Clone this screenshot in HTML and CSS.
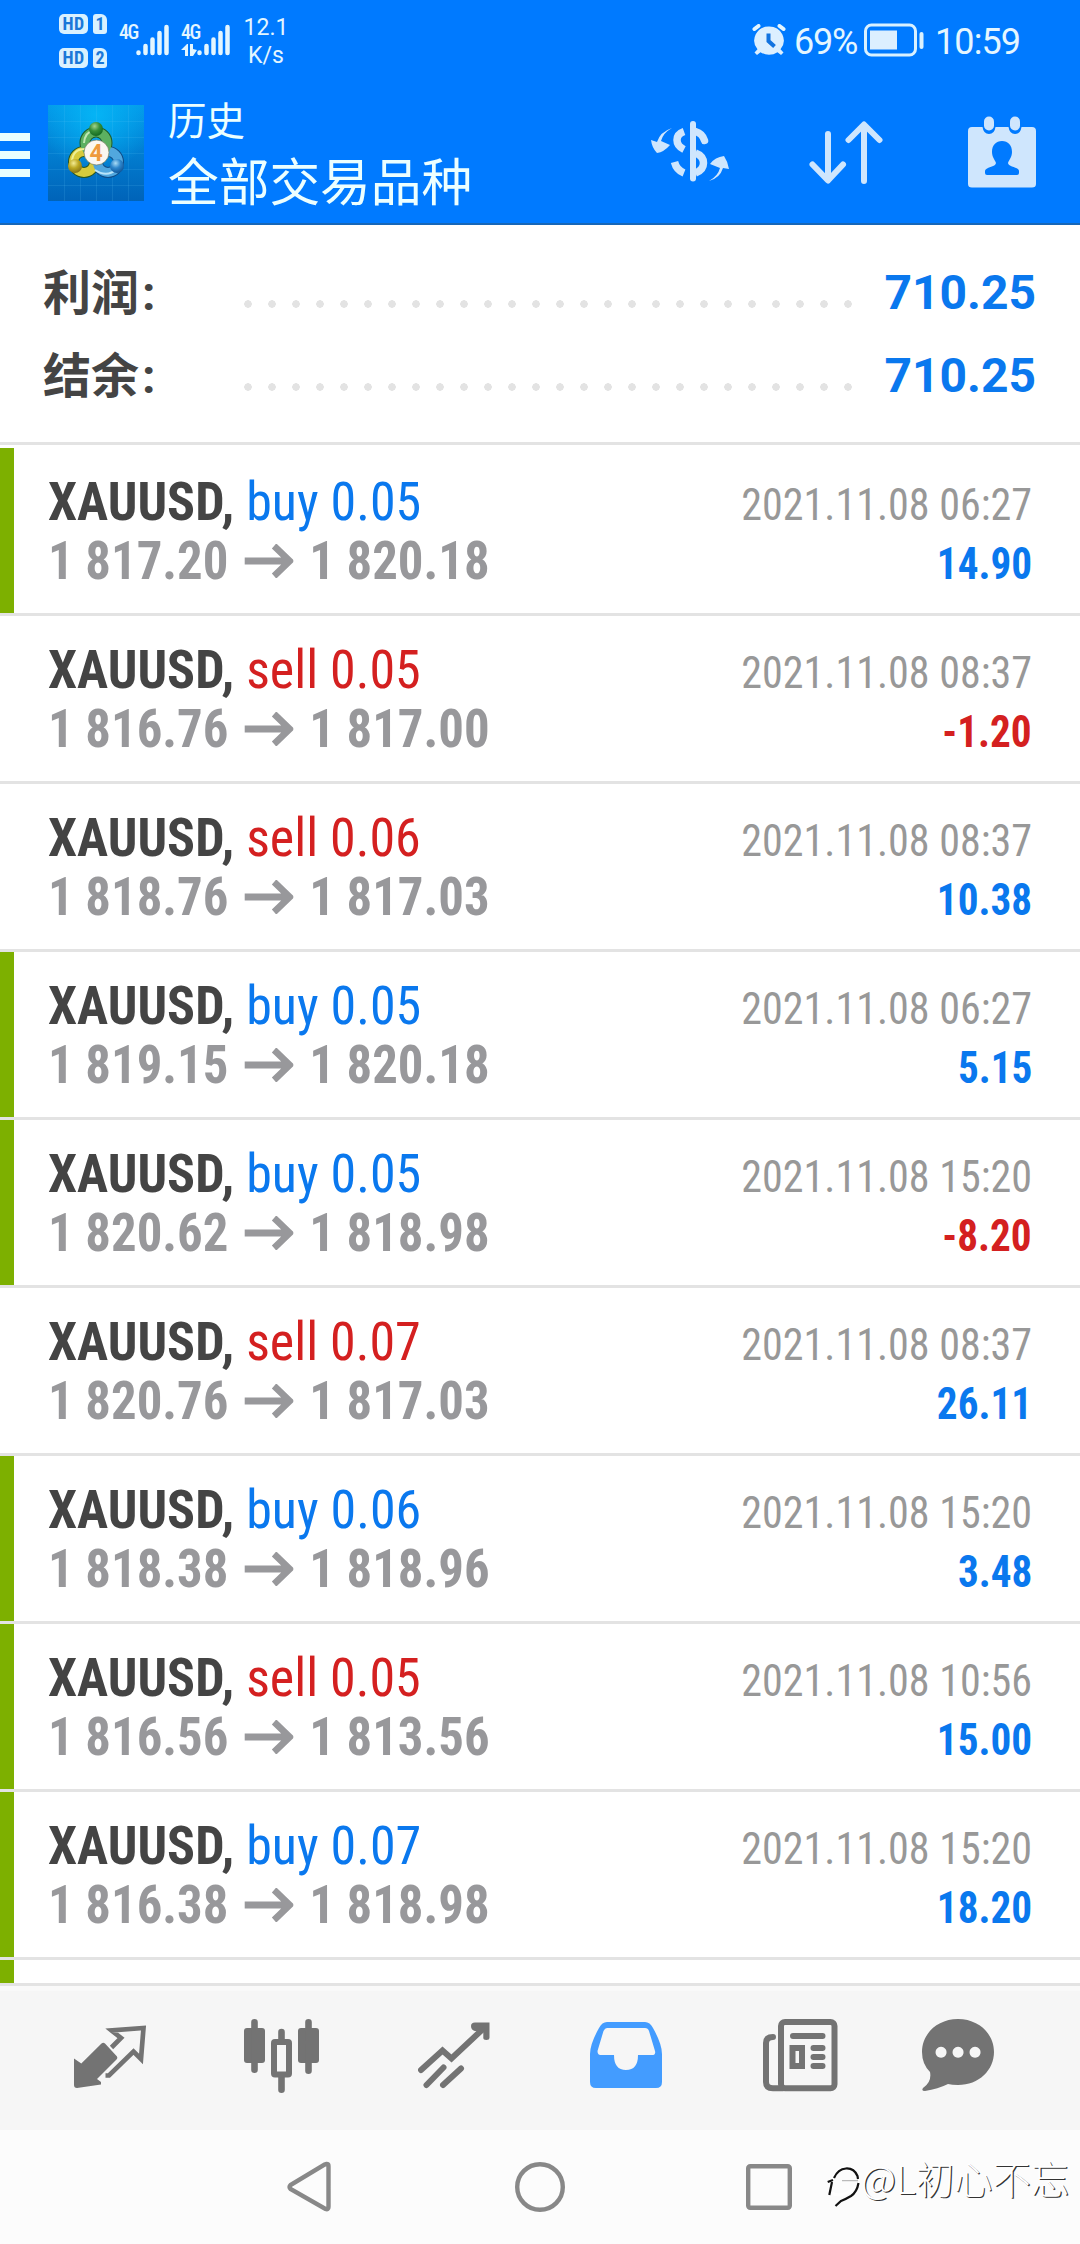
FILE: index.html
```
<!DOCTYPE html>
<html lang="zh-CN">
<head>
<meta charset="utf-8">
<title>历史</title>
<link rel="stylesheet" href="styles.css">
</head>
<body>
<header class="top">
  <div class="status">
    <div class="sims">
      <div class="sim"><b class="hd">HD</b><b class="slot">1</b></div>
      <div class="sim"><b class="hd">HD</b><b class="slot">2</b></div>
    </div>
    <div class="net">4G</div>
    <svg class="bars" viewBox="0 0 34 32"><path d="M2.5 28.500v.5M9.500 22v7M16.500 15.500V29M23.500 9v20M30.500 3v26"/></svg>
    <div class="net net2">4G<svg viewBox="0 0 17 12"><path d="M0 6 6 0h1v12H4V6zM9 0h3v5l4 1-4 6H9z"/></svg></div>
    <svg class="bars" viewBox="0 0 34 32"><path d="M2.500 28.500v.5M9.500 22v7M16.500 15.500V29M23.500 9v20M30.500 3v26"/></svg>
    <div class="speed">12.1<br>K/s</div>
    <svg class="alarm" viewBox="0 0 34 32"><path class="fill" d="M17 2.500a14.500 14 0 0 1 11.500 22.800l3 3.200-2.500 2.500-3.500-2.800a15 15 0 0 1-17 0L5 31l-2.500-2.500 3-3.200A14.500 14 0 0 1 17 2.500z"/><path class="ear" d="M2.500 5 6.500 2M31.500 5l-4-3"/><path class="hand" d="M16.500 9.500V17l6 5.500"/></svg>
    <div class="pct">69%</div>
    <svg class="battery" viewBox="0 0 60 34"><rect x="1.500" y="2" width="50" height="30" rx="6"/><path class="fill" d="M6 7.500h27v19H6z"/><path class="cap" d="M57.500 11v13"/></svg>
    <div class="clock">10:59</div>
  </div>
  <div class="bar">
    <div class="menu"><i></i><i></i><i></i></div>
    <svg class="logo" viewBox="0 0 96 96">
      <defs>
        <linearGradient id="bg" x1="0" y1="0" x2="0" y2="1"><stop offset="0" stop-color="#0398e8"/><stop offset="1" stop-color="#0063b8"/></linearGradient>
        <radialGradient id="glow" cx=".5" cy=".1" r=".6"><stop offset="0" stop-color="#05b4f5"/><stop offset="1" stop-color="#05b4f5" stop-opacity="0"/></radialGradient>
        <radialGradient id="g" cx=".4" cy=".3" r=".7"><stop offset="0" stop-color="#a4d48c"/><stop offset=".5" stop-color="#37903a"/><stop offset="1" stop-color="#146a23"/></radialGradient>
        <radialGradient id="y" cx=".4" cy=".3" r=".7"><stop offset="0" stop-color="#f3eb94"/><stop offset=".5" stop-color="#bda923"/><stop offset="1" stop-color="#877416"/></radialGradient>
        <radialGradient id="b" cx=".4" cy=".3" r=".7"><stop offset="0" stop-color="#a9dcf6"/><stop offset=".5" stop-color="#2f87cc"/><stop offset="1" stop-color="#11589c"/></radialGradient>
      </defs>
      <path fill="url(#bg)" d="M0 0h96v96H0z"/><path fill="url(#glow)" d="M0 0h96v96H0z"/>
      <path stroke="#65c8f5" stroke-opacity=".15" d="M16.500 0v96M32.500 0v96M48.500 0v96M64.500 0v96M80.500 0v96M0 16.500h96M0 32.500h96M0 48.500h96M0 64.500h96M0 80.500h96"/>
      <g fill="none" stroke-width="9">
        <circle cx="36" cy="57" r="10.500" stroke="#27551f" stroke-width="11"/><circle cx="60" cy="57" r="10.500" stroke="#0f4b86" stroke-width="11"/><circle cx="48" cy="38" r="11" stroke="#1d5a27" stroke-width="11"/>
        <circle cx="36" cy="57" r="10.500" stroke="#d7cb3c"/><circle cx="60" cy="57" r="10.500" stroke="#51a7de"/><circle cx="48" cy="38" r="11" stroke="#5cb060"/>
        <path stroke="#eef095" stroke-width="2" d="M24 56q1-12 13-12"/><path stroke="#b8e4fa" stroke-width="2" d="M47 65q12 8 22-1"/><path stroke="#bfe7b4" stroke-width="2" d="M36 38q1-11 9-12"/>
      </g>
      <circle cx="48" cy="24" r="7" fill="url(#g)"/><circle cx="27" cy="61" r="7" fill="url(#y)"/><circle cx="69" cy="61" r="7" fill="url(#b)"/>
      <circle cx="48.500" cy="47.500" r="12.500" fill="#fbf7f0" stroke="#6f7a5c" stroke-width=".7"/>
      <text x="48" y="56" text-anchor="middle" class="four">4</text>
    </svg>
    <div class="titles"><div class="t1">历史</div><div class="t2">全部交易品种</div></div>
    <svg class="i-dollar" viewBox="650 120 80 63">
      <path class="fill" d="M672 128q-9 5-11 13l9 4q-6 7-13 8-5-5-6-13l6 2q3-10 15-14zM709 181q9-5 11-13l-10-4q5-7 14-8 4 6 5 13l-6-1q-3 10-14 13z"/>
      <path class="fill" d="M693 121q3 0 3 3v54.500q0 3-3 3t-3-3V124q0-3 3-3z"/>
      <path class="s" d="M684 131.500q-7 2.500-7 8.500t7 9.500M674.500 162q2 8 9.500 11"/><path class="s" d="M695.500 131.500q7 2 9 9" stroke-linecap="round"/><path class="s" d="M695.500 153q8 3 8 10t-8 10"/>
    </svg>
    <svg class="i-sort" viewBox="809 120 74 65"><path d="M828 134v46M812.500 164.500 828 180.500l15-16M864 181V125M848.500 140 864 124.500 879.500 140"/></svg>
    <svg class="i-cal" viewBox="968 116 68 72">
      <path class="fill" d="M972 127h10.500q1 7 6.500 7t6.500-7h13q1 7 6.500 7t6.500-7H1032q4 0 4 4v53q0 3.500-4 3.500H972q-4 0-4-3.500v-53q0-4 4-4z"/>
      <rect class="fill" x="984" y="116.500" width="10" height="14" rx="5"/><rect class="fill" x="1010" y="116.500" width="10" height="14" rx="5"/>
      <path class="cut" d="M1002 141c6 0 10 4 10 11 0 5-3 8-4 11 0 4 11 4 11 8v2q0 2-2 2h-30q-2 0-2-2v-2c0-4 11-4 11-8-1-3-4-6-4-11 0-7 4-11 10-11z"/>
    </svg>
  </div>
</header>
<section class="summary">
  <div class="sum"><span class="label">利润<i>:</i></span><span class="dots"></span><span class="val">710.25</span></div>
  <div class="sum"><span class="label">结余<i>:</i></span><span class="dots"></span><span class="val">710.25</span></div>
</section>
<svg class="defs"><symbol id="arr" viewBox="0 0 52 34" preserveAspectRatio="none"><path d="M0 17h48M31.500 2 48 17 31.500 32" fill="none" stroke="#98989b" stroke-width="7"/></symbol></svg>
<main class="list">
  <article class="deal mark"><div class="line"><div class="sym">XAUUSD, <span class="buy">buy 0.05</span></div><time>2021.11.08 06:27</time></div><div class="line"><div class="px">1 817.20<svg><use href="#arr"/></svg>1 820.18</div><b class="pos">14.90</b></div></article>
  <article class="deal"><div class="line"><div class="sym">XAUUSD, <span class="sell">sell 0.05</span></div><time>2021.11.08 08:37</time></div><div class="line"><div class="px">1 816.76<svg><use href="#arr"/></svg>1 817.00</div><b class="neg">-1.20</b></div></article>
  <article class="deal"><div class="line"><div class="sym">XAUUSD, <span class="sell">sell 0.06</span></div><time>2021.11.08 08:37</time></div><div class="line"><div class="px">1 818.76<svg><use href="#arr"/></svg>1 817.03</div><b class="pos">10.38</b></div></article>
  <article class="deal mark"><div class="line"><div class="sym">XAUUSD, <span class="buy">buy 0.05</span></div><time>2021.11.08 06:27</time></div><div class="line"><div class="px">1 819.15<svg><use href="#arr"/></svg>1 820.18</div><b class="pos">5.15</b></div></article>
  <article class="deal mark"><div class="line"><div class="sym">XAUUSD, <span class="buy">buy 0.05</span></div><time>2021.11.08 15:20</time></div><div class="line"><div class="px">1 820.62<svg><use href="#arr"/></svg>1 818.98</div><b class="neg">-8.20</b></div></article>
  <article class="deal"><div class="line"><div class="sym">XAUUSD, <span class="sell">sell 0.07</span></div><time>2021.11.08 08:37</time></div><div class="line"><div class="px">1 820.76<svg><use href="#arr"/></svg>1 817.03</div><b class="pos">26.11</b></div></article>
  <article class="deal mark"><div class="line"><div class="sym">XAUUSD, <span class="buy">buy 0.06</span></div><time>2021.11.08 15:20</time></div><div class="line"><div class="px">1 818.38<svg><use href="#arr"/></svg>1 818.96</div><b class="pos">3.48</b></div></article>
  <article class="deal mark"><div class="line"><div class="sym">XAUUSD, <span class="sell">sell 0.05</span></div><time>2021.11.08 10:56</time></div><div class="line"><div class="px">1 816.56<svg><use href="#arr"/></svg>1 813.56</div><b class="pos">15.00</b></div></article>
  <article class="deal mark"><div class="line"><div class="sym">XAUUSD, <span class="buy">buy 0.07</span></div><time>2021.11.08 15:20</time></div><div class="line"><div class="px">1 816.38<svg><use href="#arr"/></svg>1 818.98</div><b class="pos">18.20</b></div></article>
  <article class="deal mark"></article>
</main>
<nav class="tabs">
  <svg class="n1" viewBox="74 2022 73 68"><path d="M101.500 2043.500q1.800-1.500 3.500 0l12 13q1 1.500-.5 3L97 2079l4 3v2.500L77 2088q-3 0-3-3v-26.500l7.300 5z"/><path class="o" stroke-width="4.700" stroke-linecap="butt" d="M111.500 2047.500 121 2038 111.500 2030.500 143.500 2028 141 2059 133.500 2051.500 109 2075.500H105.500"/></svg>
  <svg class="n2" viewBox="244 2018 75 76"><rect x="244" y="2028" width="21" height="35" rx="3"/><rect x="298" y="2028" width="21" height="35" rx="3"/><path class="o" d="M254.500 2022.300V2069.700M308.500 2022.300V2070.700M281.500 2032V2040M281.500 2076V2089.700" stroke-width="6.600"/><rect class="o" x="274" y="2042" width="15" height="32.500" stroke-width="6" rx="1"/></svg>
  <svg class="n3" viewBox="418 2021 72 68"><path class="o" d="M421 2070 442.500 2050.500 451.500 2058.500 484 2028M426.500 2085 443.500 2067.500M443 2085 461 2068.500"/><path d="M471 2026q0-3.500 4-3.500h14.500v15q0 2.500-3.200 2.500t-3-2.500V2031h-8.500q-3.800-1-3.800-5z"/></svg>
  <svg class="n4" viewBox="590 2021 73 67"><path fill-rule="evenodd" d="M607 2022h38q5 0 8 6 9 16 9 26v28q0 6-6 6H596q-6 0-6-6v-28q0-10 9-26 3-6 8-6zM607 2028q-2 0-3.500 3l-6 20q0 4 3 4h13.500q0 15 12 15t12-15h14q4 0 3-4l-6-20q-1-3-4-3z"/></svg>
  <svg class="n5" viewBox="762 2018 76 74"><rect class="o" x="781" y="2022" width="53.500" height="66.300" rx="4"/><path class="o" d="M773 2037q-7 0-7 6v39q0 6.300 7 6.300h10" stroke-linecap="butt"/><path class="o" d="M793 2036h29.500M813.500 2048h9M813.500 2057h9M813.500 2066h9"/><rect class="o" x="792.500" y="2048" width="9.500" height="18"/></svg>
  <svg class="n6" viewBox="921 2018 73 74"><path fill-rule="evenodd" d="M958 2019c21 0 36 15 36 33s-15 33-36 33q-6 0-10-1-10 5-23 7-4 0-2-3 9-6 7-16-8-8-8-20c0-18 15-33 36-33zM941 2046.800a5.500 5.500 0 1 0 .1 0zM958 2046.800a5.500 5.500 0 1 0 .1 0zM975 2046.800a5.500 5.500 0 1 0 .1 0z"/></svg>
</nav>
<footer class="sys">
  <svg class="back" viewBox="0 0 44 52"><path d="M39.500 3Q41.500 3 41.500 5V46Q41.500 49 38.500 48L3.500 28Q1.500 26 3.500 24L37.500 3.500Z"/></svg>
  <svg class="home" viewBox="0 0 50 50"><circle cx="25" cy="25" r="22.800"/></svg>
  <svg class="recent" viewBox="0 0 46 46"><rect x="2.200" y="2.200" width="41.600" height="41.600" rx="2"/></svg>
  <div class="water"><svg viewBox="0 0 34 42"><path class="w" d="M6 14Q11 3 21 2 27 3 30 7M6 28Q16 34 29 22"/><path class="k" d="M1.700 17 7 15M8 13Q12 4 20 3.500 28 3 31.500 11L32 14M6 17 3.300 30M32.500 18Q31 27 25 31 20 34 15 36L9.500 41"/><path class="thin" d="M16 15.700H32"/></svg><span>@L初心不忘</span></div>
</footer>
</body>
</html>
```
FILE: styles.css
```
* { box-sizing: border-box; }
body { margin: 0; width: 1080px; height: 2244px; overflow: hidden; background: #fff; font-family: Roboto, "Noto Sans CJK SC", sans-serif; display: flex; flex-direction: column; }
svg { display: block; flex: none; }
.defs { display: none; }

.top { height: 225px; background: #007aff; border-bottom: 2px solid #1767b8; color: #e4f6ff; flex: none; }
.status { height: 80px; display: flex; align-items: flex-start; padding-left: 59px; }
.sims { display: flex; flex-direction: column; gap: 14px; padding-top: 14px; width: 49px; }
.sim { display: flex; gap: 5px; height: 20px; }
.sim b { background: #d9f1ff; color: #1b78d8; font: 700 18px/20px "Roboto Condensed", sans-serif; text-align: center; }
.hd { width: 29px; border-radius: 5px; letter-spacing: .5px; }
.slot { width: 14px; border-radius: 3px 6px 3px 3px; }
.net { width: 17px; margin: 22px 0 0 11px; font: 500 20px/20px "Roboto Condensed", sans-serif; white-space: nowrap; letter-spacing: -1.500px; }
.net2 { margin-left: 11px; }
.net2 svg { width: 17px; height: 12px; margin-top: 2px; fill: #e4f6ff; }
.bars { width: 34px; height: 32px; margin-top: 24px; fill: none; stroke: #e4f6ff; stroke-width: 4.500; stroke-linecap: round; }
.net2 + .bars { margin-left: -1px; }
.speed { width: 46px; margin: 14px 0 0 12px; font-size: 23px; line-height: 28px; text-align: center; }
.alarm { width: 34px; height: 32px; margin: 24px 0 0 463px; }
.fill { fill: #dcefff; stroke: none; }
.ear { stroke: #e4f6ff; stroke-width: 4; stroke-linecap: round; }
.hand { stroke: #1173e0; stroke-width: 4; fill: none; }
.pct, .clock { font-size: 36px; line-height: 42px; margin-top: 21px; }
.pct { width: 63px; margin-left: 8px; letter-spacing: -1.200px; }
.battery { width: 60px; height: 34px; margin: 23px 0 0 7px; fill: none; stroke: #d9f1ff; stroke-width: 3; }
.battery .cap { stroke-width: 4; stroke-linecap: round; }
.clock { margin-left: 11px; letter-spacing: -.9px; }

.bar { height: 143px; display: flex; align-items: flex-start; }
.menu { width: 30px; margin-top: 53px; display: flex; flex-direction: column; gap: 10px; }
.menu i { height: 8px; background: #e8ffff; }
.logo { width: 96px; height: 96px; margin: 25px 0 0 18px; }
.four { font: 700 23px Roboto, sans-serif; fill: #ee9a3c; }
.titles { margin: 21px 0 0 24px; width: 483px; color: #ecffff; white-space: nowrap; }
.t1 { font-size: 38.500px; line-height: 42px; }
.t2 { font-size: 50.700px; line-height: 60px; margin-top: 11px; }
.i-dollar { width: 80px; height: 63px; margin-top: 40px; margin-left: -1px; }
.i-dollar .s { fill: none; stroke: #cfe6fd; stroke-width: 7.500; }
.i-sort { width: 74px; height: 65px; margin: 40px 0 0 79px; fill: none; stroke: #cfe6fd; stroke-width: 6; stroke-linecap: round; stroke-linejoin: round; }
.i-cal { width: 68px; height: 72px; margin: 36px 0 0 85px; }
.bar .fill { fill: #cfe6fd; }
.bar .cut { fill: #007aff; }

.summary { height: 220px; padding: 26px 44px 0 43px; border-bottom: 3px solid #e3e3e3; flex: none; }
.sum { height: 83px; display: flex; align-items: center; font-weight: 700; font-size: 48px; line-height: 83px; }
.label { width: 201px; color: #444; padding-top: 2px; }
.label i { font-style: normal; margin-left: 3px; }
.dots { width: 624px; height: 8px; margin: 23px 0 0 -8px; background: radial-gradient(circle 4px, #e3e3e3 3.500px, transparent 4px) 0 0 / 24px 8px; }
.val { margin-left: auto; color: #0a78ee; }

.list { height: 1538px; padding-top: 3px; overflow: hidden; flex: none; font-family: "Roboto Condensed", Roboto, sans-serif; }
.deal { height: 168px; padding: 24px 48px 0 35px; border-bottom: 3px solid #e3e3e3; display: flex; flex-direction: column; }
.mark { background: linear-gradient(#7db000, #7db000) no-repeat 0 0 / 14px 165px; }
.line { height: 59px; line-height: 59px; padding-left: 13px; display: flex; justify-content: space-between; align-items: baseline; white-space: nowrap; }
.sym, .px { font-size: 54px; font-weight: 700; transform-origin: left; }
.sym { color: #444; transform: scaleX(.963); }
.sym span { font-weight: 400; }
.sym .buy, .pos { color: #0a78ee; }
.sym .sell, .neg { color: #d42020; }
.px { color: #98989b; display: flex; align-items: baseline; transform: scaleX(.94); }
.px svg { width: 52px; height: 34px; margin: 0 17px; align-self: center; }
time, .line b { font-size: 45px; transform-origin: right; }
time { color: #989898; transform: scaleX(.935); }
.line b { transform: scaleX(.915); }

.tabs { height: 147px; border-top: 3px solid #e3e3e3; background: linear-gradient(#f9f9f9 5px, #f6f6f6 5px); display: flex; align-items: flex-start; fill: #737373; stroke-width: 6; flex: none; }
.tabs .o { fill: none; stroke: #737373; }
.n2 .o, .n3 .o, .n5 .o { stroke-linecap: round; }
.n1 { width: 73px; height: 68px; margin: 36px 0 0 74px; }
.n2 { width: 75px; height: 76px; margin: 32px 0 0 97px; }
.n3 { width: 72px; height: 68px; margin: 35px 0 0 99px; }
.n4 { width: 73px; height: 67px; margin: 35px 0 0 100px; fill: #439cff; }
.n5 { width: 76px; height: 74px; margin: 32px 0 0 99px; }
.n6 { width: 73px; height: 74px; margin: 32px 0 0 83px; }
.sys { height: 114px; background: #fcfcfc; display: flex; align-items: flex-start; flex: none; fill: none; stroke: #888; stroke-width: 4.400; }
.back { width: 44px; height: 52px; margin: 31px 0 0 287px; }
.home { width: 50px; height: 50px; margin: 32px 0 0 184px; }
.recent { width: 46px; height: 46px; margin: 34px 0 0 181px; }
.water { display: flex; align-items: flex-start; margin: 21px 0 0 34px; white-space: nowrap; font: 300 38.300px/54px "Noto Sans CJK SC", sans-serif; color: #fff; text-shadow: 1.200px 1px 0 #333; }
.water svg { width: 34px; height: 42px; margin: 14px 1px 0 0; }
.k { stroke: #111; stroke-width: 2.200; }
.w { stroke: #fff; stroke-width: 3; }
.thin { stroke: #aaa; stroke-width: 1; }
```
